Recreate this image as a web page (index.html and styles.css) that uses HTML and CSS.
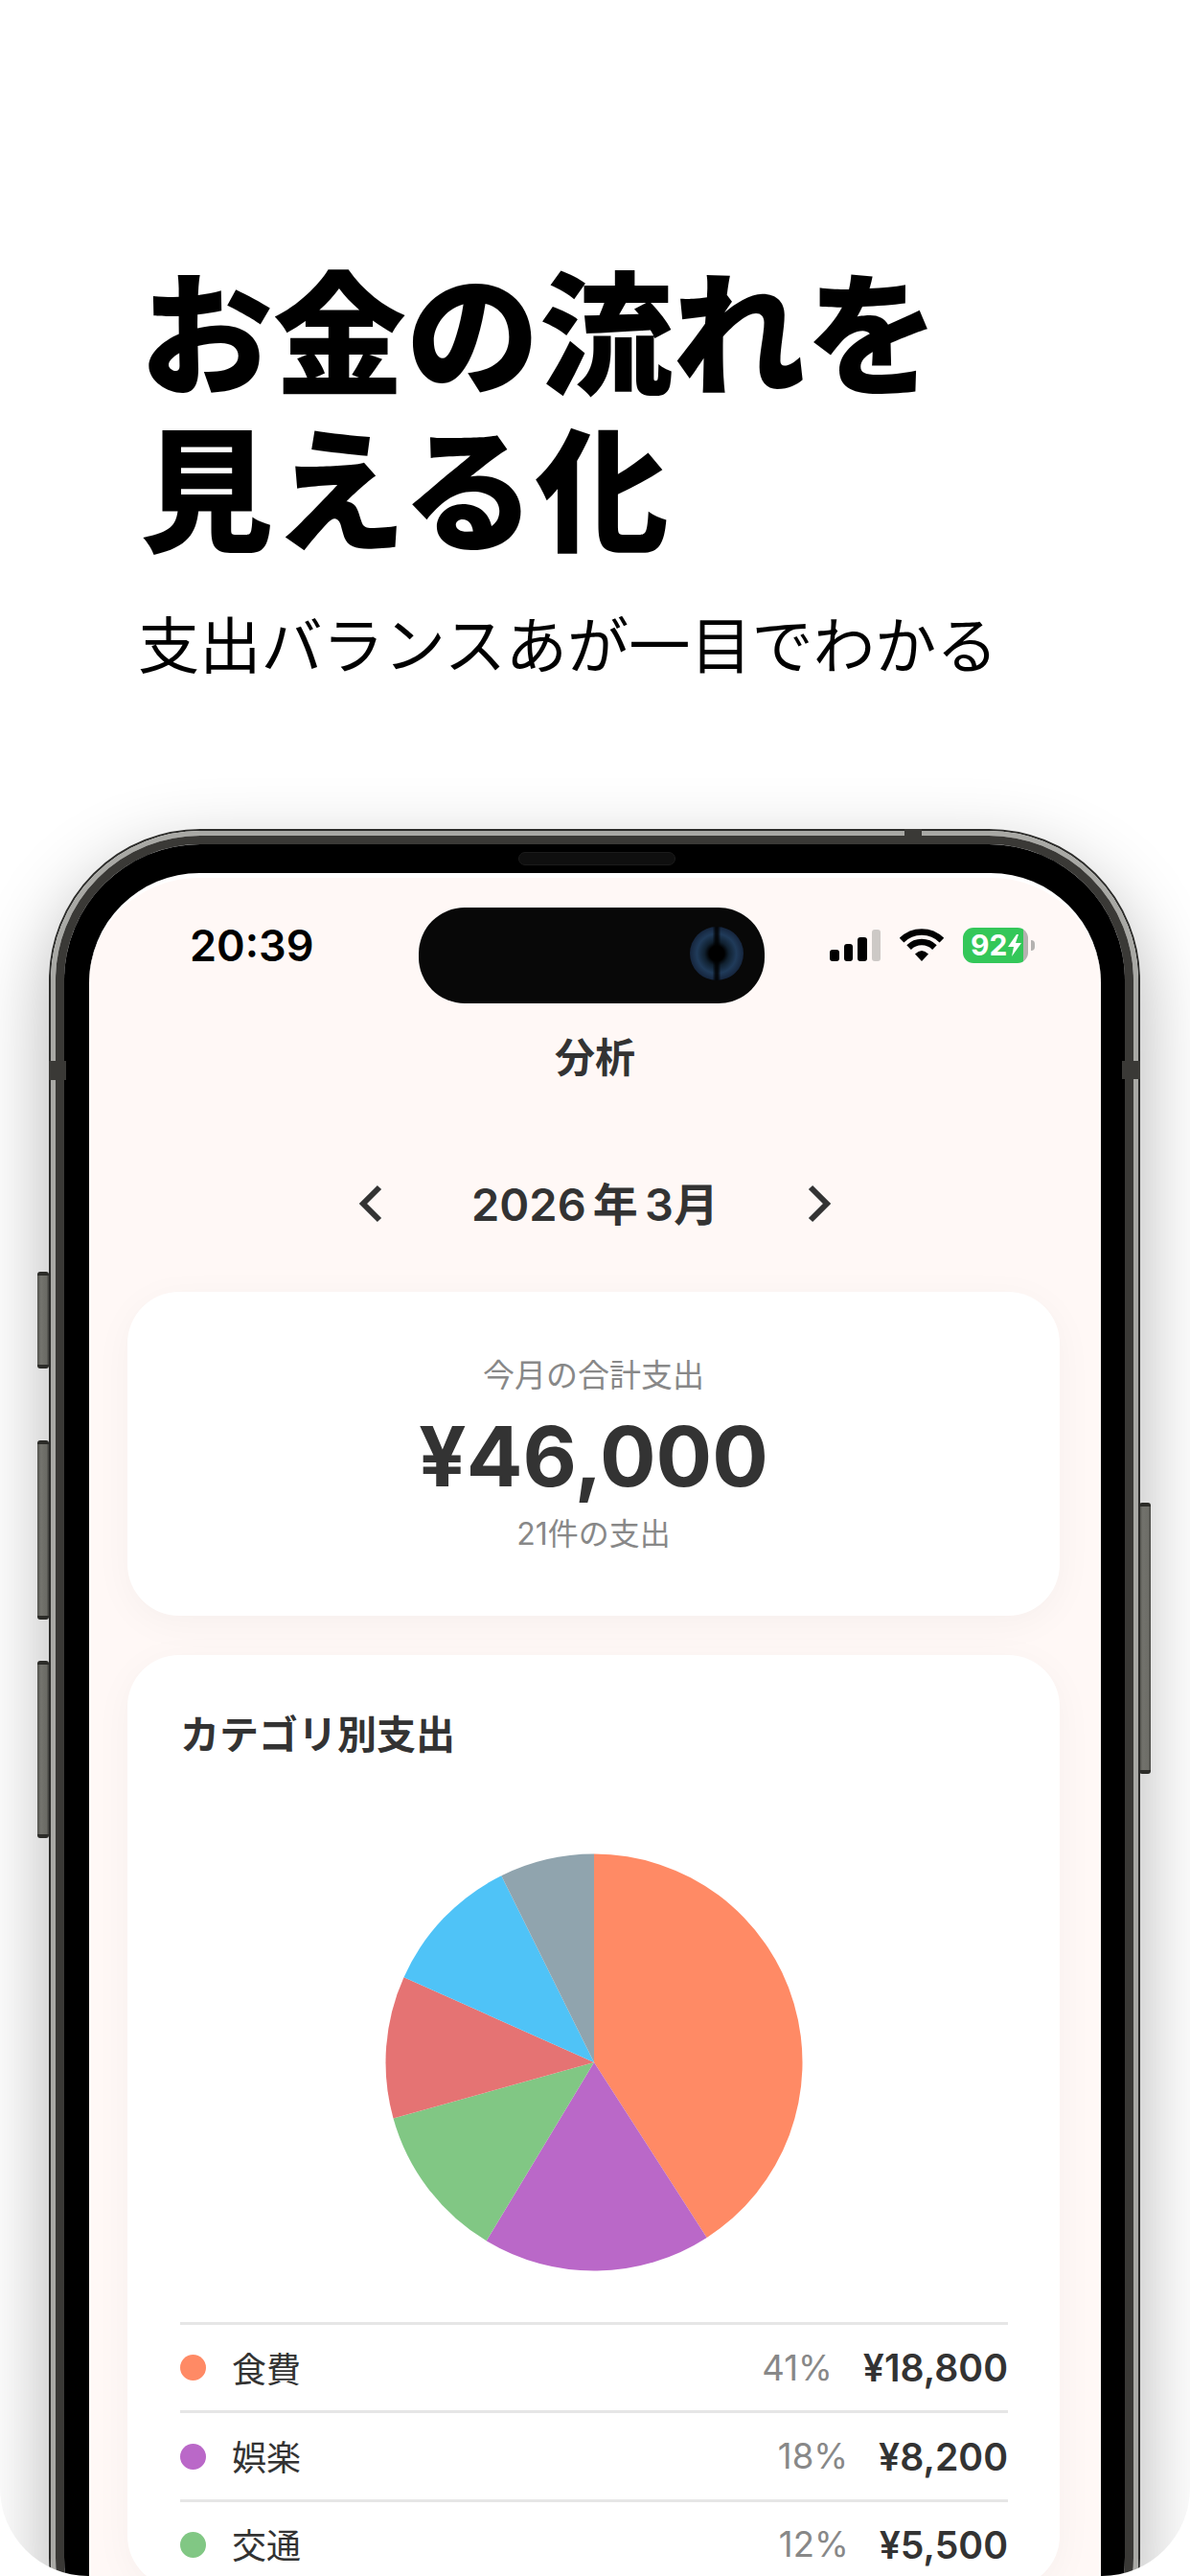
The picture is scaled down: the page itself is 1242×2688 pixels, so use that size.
FILE: index.html
```html
<!DOCTYPE html>
<html lang="ja">
<head>
<meta charset="utf-8">
<title>お金の流れを見える化</title>
<link rel="stylesheet" href="styles.css">
</head>
<body>
<div class="canvas">
  <header class="hero">
    <h1 class="hero-title">お金の流れを<br>見える化</h1>
    <p class="hero-sub">支出バランスあが一目でわかる</p>
  </header>

  <div class="phone">
    <span class="side-btn btn-action"></span>
    <span class="side-btn btn-up"></span>
    <span class="side-btn btn-down"></span>
    <span class="side-btn btn-power"></span>
    <div class="bezel-outer">
      <div class="bezel-light">
        <div class="bezel-dark">
          <div class="bezel-black">
            <span class="speaker"></span>
            <div class="screen">
              <div class="island"><span class="camera"></span></div>
              <div class="status">
                <span class="time">20:39</span>
                <div class="status-icons">
                  <div class="signal">
                    <span class="bar bar1"></span>
                    <span class="bar bar2"></span>
                    <span class="bar bar3"></span>
                    <span class="bar bar4"></span>
                  </div>
                  <svg class="wifi" width="46" height="34" viewBox="0 0 46 34">
                    <path d="M2.1 12.1A29.5 29.5 0 0 1 43.9 12.1" fill="none" stroke="#000" stroke-width="6.5"/>
                    <path d="M9.6 19.6A19 19 0 0 1 36.4 19.6" fill="none" stroke="#000" stroke-width="6.5"/>
                    <path d="M23 34L16 26.5Q23 19.5 30 26.5Z" fill="#000"/>
                  </svg>
                  <div class="battery">
                    <div class="battery-body">
                      <span class="battery-level">92</span>
                      <svg class="bolt" width="14" height="23" viewBox="0 0 14 23"><path d="M9 0L0 13H6L4 23L14 9H8L11 0Z" fill="#fff"/></svg>
                    </div>
                    <span class="battery-nub"></span>
                  </div>
                </div>
              </div>

              <div class="nav-title">分析</div>

              <div class="month-row">
                <svg class="chev" width="26" height="40" viewBox="0 0 26 40"><path d="M22 3L5 20L22 37" fill="none" stroke="#333" stroke-width="6"/></svg>
                <span class="month">2026 年 3月</span>
                <svg class="chev" width="26" height="40" viewBox="0 0 26 40"><path d="M4 3L21 20L4 37" fill="none" stroke="#333" stroke-width="6"/></svg>
              </div>

              <section class="card summary">
                <div class="summary-label">今月の合計支出</div>
                <div class="summary-amount">¥46,000</div>
                <div class="summary-count">21件の支出</div>
              </section>

              <section class="card category">
                <h2 class="category-title">カテゴリ別支出</h2>
                <svg class="pie" width="436" height="436" viewBox="-218 -218 436 436">
                  <path d="M0 0L0 -217.5A217.5 217.5 0 0 1 117.7 182.9Z" fill="#ff8a65"/>
                  <path d="M0 0L117.7 182.9A217.5 217.5 0 0 1 -112.3 186.3Z" fill="#ba68c8"/>
                  <path d="M0 0L-112.3 186.3A217.5 217.5 0 0 1 -209.5 58.4Z" fill="#81c784"/>
                  <path d="M0 0L-209.5 58.4A217.5 217.5 0 0 1 -198.5 -88.8Z" fill="#e57373"/>
                  <path d="M0 0L-198.5 -88.8A217.5 217.5 0 0 1 -96.7 -194.8Z" fill="#4fc3f7"/>
                  <path d="M0 0L-96.7 -194.8A217.5 217.5 0 0 1 0 -217.5Z" fill="#90a4ae"/>
                </svg>
                <ul class="legend">
                  <li class="legend-row">
                    <span class="dot dot-food"></span>
                    <span class="legend-name">食費</span>
                    <span class="legend-pct">41%</span>
                    <span class="legend-amount">¥18,800</span>
                  </li>
                  <li class="legend-row">
                    <span class="dot dot-fun"></span>
                    <span class="legend-name">娯楽</span>
                    <span class="legend-pct">18%</span>
                    <span class="legend-amount">¥8,200</span>
                  </li>
                  <li class="legend-row">
                    <span class="dot dot-transit"></span>
                    <span class="legend-name">交通</span>
                    <span class="legend-pct">12%</span>
                    <span class="legend-amount">¥5,500</span>
                  </li>
                </ul>
              </section>
            </div>
          </div>
        </div>
      </div>
      <span class="band band-left"></span>
      <span class="band band-right"></span>
      <span class="band band-top"></span>
    </div>
  </div>
</div>
</body>
</html>
```

FILE: styles.css
```css
* { box-sizing: border-box; }

html, body {
  margin: 0;
  padding: 0;
  background: #fff;
}

body {
  font-family: Inter, "Noto Sans CJK JP", sans-serif;
  color: #333;
}

.canvas {
  width: 1242px;
  height: 2688px;
  overflow: hidden;
  background: #fff;
  border-radius: 0 0 92px 92px;
}

/* Hero copy */
.hero {
  padding: 259px 0 0 146px;
}

.hero-title {
  margin: 0;
  font-family: "Noto Sans CJK JP", sans-serif;
  font-size: 139px;
  font-weight: 900;
  line-height: 163px;
  color: #000;
}

.hero-sub {
  margin: 44px 0 0 -2px;
  font-family: "Noto Sans CJK JP", sans-serif;
  font-size: 64.2px;
  font-weight: 400;
  line-height: 80px;
  color: #000;
}

/* Device */
.phone {
  position: relative;
  width: 1139px;
  margin: 156px 0 0 51px;
}

.bezel-outer {
  position: relative;
  border: 2px solid #2c2c2a;
  border-radius: 158px;
  box-shadow: 0 30px 80px rgba(0, 0, 0, .3);
}

.bezel-light {
  border: 5px solid #a9a9a5;
  border-radius: 156px;
}

.bezel-dark {
  border: 9px solid #3a3936;
  border-radius: 151px;
}

.bezel-black {
  position: relative;
  padding: 30px 25px 0 26px;
  background: #000;
  border-radius: 142px;
}

.speaker {
  position: absolute;
  top: 8px;
  left: 474px;
  width: 164px;
  height: 14px;
  background: #0f0f0f;
  border: 1px solid #1b1b1b;
  border-radius: 7px;
}

.side-btn {
  position: absolute;
  width: 12px;
  background: linear-gradient(90deg, #5c5c56, #85857e 30%, #7d7d76 80%, #4a4a46);
  border-top: 4px solid #33332f;
  border-bottom: 4px solid #33332f;
  border-radius: 3px;
}

.btn-action { left: -12px; top: 462px; height: 101px; }
.btn-up { left: -12px; top: 638px; height: 187px; }
.btn-down { left: -12px; top: 868px; height: 185px; }
.btn-power { right: -11px; top: 703px; height: 283px; }

.band {
  position: absolute;
  background: #3a3936;
}

.band-left { left: -2px; top: 240px; width: 18px; height: 20px; }
.band-right { right: -2px; top: 240px; width: 19px; height: 19px; }
.band-top { left: 891px; top: -2px; width: 18px; height: 16px; }

/* Screen */
.screen {
  position: relative;
  width: 1056px;
  height: 1900px;
  overflow: hidden;
  background: #fff8f6;
  border-top: 5px solid #fff;
  border-radius: 115px 115px 0 0;
}

.island {
  position: absolute;
  top: 31px;
  left: 344px;
  width: 361px;
  height: 100px;
  background: #080808;
  border-radius: 48px;
}

.camera {
  position: absolute;
  top: 20px;
  left: 283px;
  width: 56px;
  height: 56px;
  border-radius: 50%;
  background:
    linear-gradient(90deg, transparent 42%, rgba(0, 0, 0, .85) 48%, rgba(0, 0, 0, .85) 52%, transparent 58%),
    radial-gradient(circle, #000 0 20%, #10202f 32%, #203b5a 52%, #16263e 70%, #0a0f18 92%, #080808 100%);
}

.status {
  display: flex;
  align-items: center;
  justify-content: space-between;
  height: 140px;
  padding: 0 69px 0 105px;
}

.time {
  font-size: 45px;
  font-weight: 600;
  color: #000;
}

.status-icons {
  display: flex;
  align-items: center;
  gap: 20px;
}

.signal {
  display: flex;
  align-items: flex-end;
  gap: 5px;
  height: 33px;
}

.bar {
  width: 9.5px;
  background: #000;
  border-radius: 3px;
}

.bar1 { height: 12px; }
.bar2 { height: 18px; }
.bar3 { height: 25px; }
.bar4 { height: 33px; background: #cdc9c6; }

.battery {
  display: flex;
  align-items: center;
  gap: 3px;
}

.battery-body {
  display: flex;
  align-items: center;
  width: 68px;
  height: 37px;
  padding-left: 8px;
  overflow: hidden;
  background: linear-gradient(90deg, #34c759 0 63px, #b4b2b0 63px);
  border-radius: 11px;
}

.battery-level {
  font-size: 30px;
  font-weight: 700;
  line-height: 37px;
  color: #fff;
}

.bolt {
  flex: none;
  margin-left: 1px;
}

.battery-nub {
  width: 4px;
  height: 11px;
  background: #b4b2b0;
  border-radius: 0 5px 5px 0;
}

.nav-title {
  height: 96px;
  margin-top: -3px;
  font-family: "Noto Sans CJK JP", sans-serif;
  font-size: 42px;
  font-weight: 700;
  line-height: 96px;
  text-align: center;
}

.month-row {
  display: flex;
  align-items: center;
  justify-content: center;
  gap: 92px;
  height: 96px;
  margin-top: 59px;
}

.month {
  margin-top: -6px;
  font-size: 47px;
  font-weight: 600;
  word-spacing: -.1em;
  white-space: nowrap;
}

/* Cards */
.card {
  width: 973px;
  margin-left: 40px;
  background: #fff;
  border-radius: 54px;
  box-shadow: 0 8px 40px rgba(0, 0, 0, .04);
}

.summary {
  display: flex;
  flex-direction: column;
  align-items: center;
  height: 338px;
  margin-top: 44px;
  padding-top: 63px;
}

.summary-label {
  height: 48px;
  font-size: 33px;
  line-height: 48px;
  color: #888;
}

.summary-amount {
  height: 100px;
  margin-top: 11px;
  font-size: 87px;
  font-weight: 700;
  line-height: 100px;
}

.summary-count {
  height: 44px;
  margin-top: 9px;
  font-size: 32px;
  line-height: 44px;
  color: #888;
}

.category {
  display: flex;
  flex-direction: column;
  margin-top: 41px;
  padding: 55px 54px 0 55px;
}

.category-title {
  margin: 0;
  font-size: 41px;
  font-weight: 600;
  line-height: 56px;
}

.pie {
  align-self: center;
  margin-top: 96px;
}

.legend {
  margin: 53px 0 0;
  padding: 0;
  list-style: none;
}

.legend-row {
  display: flex;
  align-items: center;
  height: 92.4px;
  border-top: 3px solid #e6e6e6;
}

.dot {
  width: 27px;
  height: 27px;
  border-radius: 50%;
}

.dot-food { background: #ff8a65; }
.dot-fun { background: #ba68c8; }
.dot-transit { background: #81c784; }

.legend-name {
  flex: 1;
  margin-left: 27px;
  margin-top: -2px;
  font-size: 36px;
}

.legend-pct {
  font-size: 36.5px;
  color: #888;
}

.legend-amount {
  margin-left: 32px;
  font-size: 39.2px;
  font-weight: 600;
}
```
